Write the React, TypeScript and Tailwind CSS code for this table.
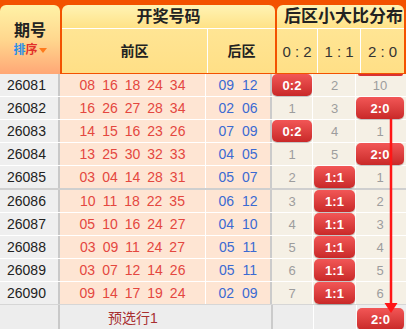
import React from "react";

type Row = {
    id: string;
    front: string[];
    back: string[];
    hit: number;
    vals: string[];
};

const LABELS = ["0:2", "1:1", "2:0"];

const ROWS: Row[] = [
    { id: "26081", front: ["08", "16", "18", "24", "34"], back: ["09", "12"], hit: 0, vals: ["", "2", "10"] },
    { id: "26082", front: ["16", "26", "27", "28", "34"], back: ["02", "06"], hit: 2, vals: ["1", "3", ""] },
    { id: "26083", front: ["14", "15", "16", "23", "26"], back: ["07", "09"], hit: 0, vals: ["", "4", "1"] },
    { id: "26084", front: ["13", "25", "30", "32", "33"], back: ["04", "05"], hit: 2, vals: ["1", "5", ""] },
    { id: "26085", front: ["03", "04", "14", "28", "31"], back: ["05", "07"], hit: 1, vals: ["2", "", "1"] },
    { id: "26086", front: ["10", "11", "18", "22", "35"], back: ["06", "12"], hit: 1, vals: ["3", "", "2"] },
    { id: "26087", front: ["05", "10", "16", "24", "27"], back: ["04", "10"], hit: 1, vals: ["4", "", "3"] },
    { id: "26088", front: ["03", "09", "11", "24", "27"], back: ["05", "11"], hit: 1, vals: ["5", "", "4"] },
    { id: "26089", front: ["03", "07", "12", "14", "26"], back: ["05", "11"], hit: 1, vals: ["6", "", "5"] },
    { id: "26090", front: ["09", "14", "17", "19", "24"], back: ["02", "09"], hit: 1, vals: ["7", "", "6"] },
];

function Badge({ label }: { label: string }) {
    return (
        <div className="h-full w-full rounded-[5px] bg-gradient-to-b from-[#f25656] to-[#c92828] shadow-[0_1px_1px_rgba(0,0,0,0.25)] flex items-center justify-center text-white text-[13px] font-bold">
            {label}
        </div>
    );
}

function DistCell({ row, i }: { row: Row; i: number }) {
    const widths = ["w-[41px] border-r border-white", "w-[43px] border-r border-white", "flex-1"];
    return (
        <div className={`${widths[i]} h-full flex items-center justify-center text-[13px] text-[#9d9d9d] ${i === 2 ? "pr-[2px]" : i === 1 ? "pl-[1px]" : ""}`}>
            {row.hit === i ? <Badge label={LABELS[i]} /> : row.vals[i]}
        </div>
    );
}

export default function App() {
    return (
        <div className="w-[406px] h-[329px] overflow-hidden bg-white font-['Liberation_Sans','Noto_Sans_CJK_SC',sans-serif] text-[14px] leading-none">
            {/* Header */}
            <div className="flex gap-[2px] bg-[#f35200] pt-[5px] pr-[2px]">
                <div className="w-[60px] h-[69px] rounded-t-[6px] bg-gradient-to-b from-[#fff2a6] via-[#ffd78e] to-[#ffa776] flex flex-col items-center justify-center gap-[5px]">
                    <div className="text-[16px] font-bold text-[#222]">期号</div>
                    <div className="flex items-center text-[12px] font-bold">
                        <span className="text-[#2a8ee6]">排</span>
                        <span className="text-[#e2302a]">序</span>
                        <svg width="8" height="5" viewBox="0 0 8 5" className="ml-[1px]">
                            <polygon points="0,0 8,0 4,5" fill="#ff7a1c" />
                        </svg>
                    </div>
                </div>

                <div className="w-[213px] rounded-t-[6px] overflow-hidden flex flex-col">
                    <div className="h-[24px] border-b border-white bg-gradient-to-b from-[#fff3b4] to-[#ffe286] flex items-center justify-center text-[16px] font-bold text-[#222]">
                        开奖号码
                    </div>
                    <div className="h-[44px] flex bg-gradient-to-b from-[#ffe594] to-[#ffdf86] text-[14px] font-bold text-[#222]">
                        <div className="w-[146px] border-r border-white flex items-center justify-center">前区</div>
                        <div className="flex-1 flex items-center justify-center">后区</div>
                    </div>
                </div>

                <div className="w-[127px] rounded-t-[6px] overflow-hidden flex flex-col">
                    <div className="h-[24px] border-b border-white bg-gradient-to-b from-[#fff3b4] to-[#ffe286] flex items-center justify-center text-[17px] font-bold text-[#222] whitespace-nowrap pl-[6px]">
                        后区小大比分布
                    </div>
                    <div className="h-[44px] flex bg-gradient-to-b from-[#ffe594] to-[#ffdf86] text-[15px] text-[#333]">
                        <div className="w-[41px] border-r border-white flex items-center justify-center whitespace-pre">0 : 2</div>
                        <div className="w-[43px] border-r border-white flex items-center justify-center whitespace-pre">1 : 1</div>
                        <div className="flex-1 flex items-center justify-center whitespace-pre">2 : 0</div>
                    </div>
                </div>
            </div>

            {/* Body */}
            <div className="relative">
                {ROWS.map((row, idx) => (
                    <div
                        key={row.id}
                        className={`flex h-[23px] ${idx === 4 ? "h-[24px] border-b-2 border-[#cfcfcf]" : idx === 9 ? "border-b border-[#d6d6d6]" : "border-b border-white"}`}
                    >
                        <div className="w-[60px] border-r-2 border-[#c9c9c9] bg-[#efefef] flex items-center pl-[7px] text-[#222]">
                            {row.id}
                        </div>
                        <div className="w-[146px] border-r border-white bg-[#fee5d3] flex items-center justify-center gap-[7px] text-[#e4473f]">
                            {row.front.map((n, i) => (
                                <span key={i}>{n}</span>
                            ))}
                        </div>
                        <div className="w-[66px] border-r-2 border-[#cbcbcb] bg-[#fee5d3] flex items-center justify-center gap-[8px] text-[#3b6ad2]">
                            {row.back.map((n, i) => (
                                <span key={i}>{n}</span>
                            ))}
                        </div>
                        <div className="flex-1 flex bg-[#f5f0e5] relative">
                            {[0, 1, 2].map((i) => (
                                <DistCell key={i} row={row} i={i} />
                            ))}
                            {idx === 0 && (
                                <div className="absolute top-0 left-[86px] right-[3px] h-[2px] rounded-b-[4px] bg-[#d93232]" />
                            )}
                        </div>
                    </div>
                ))}

                {/* Footer */}
                <div className="flex h-[26px] bg-[#ededed]">
                    <div className="w-[60px] border-r-2 border-[#c9c9c9]" />
                    <div className="w-[146px] flex items-center justify-center text-[#a82f2f]">预选行1</div>
                    <div className="w-[67px] border-r-2 border-[#cbcbcb]" />
                    <div className="w-[41px] border-r border-white" />
                    <div className="w-[43px] border-r border-white" />
                    <div className="flex-1 pt-[3px] pr-[2px]">
                        <div className="h-[22px]">
                            <Badge label="2:0" />
                        </div>
                    </div>
                </div>

                {/* arrow from first 2:0 down to forecast row */}
                <svg className="absolute left-0 top-0 pointer-events-none" width="406" height="255" viewBox="0 0 406 255">
                    <line x1="391" y1="45" x2="391" y2="230" stroke="#ff1616" strokeWidth="2.5" />
                    <polygon points="384.5,229 397.5,229 391,239" fill="#ff1616" />
                </svg>
            </div>
        </div>
    );
}
